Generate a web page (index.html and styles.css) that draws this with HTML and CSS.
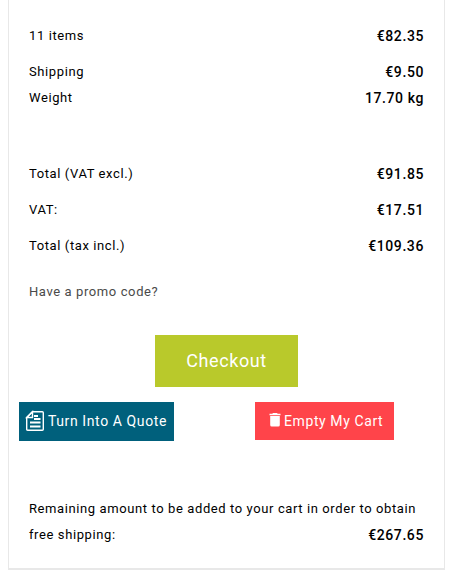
FILE: index.html
```html
<!DOCTYPE html>
<html lang="en">
<head>
    <meta charset="UTF-8">
    <meta name="viewport" content="width=device-width, initial-scale=1.0">
    <title>Cart</title>
    <link rel="stylesheet" href="styles.css">
</head>
<body>
    <div class="cart-summary">
        <div class="line">
            <span class="label">11 items</span>
            <span class="value">€82.35</span>
        </div>
        <div class="line joined">
            <span class="label">Shipping</span>
            <span class="value">€9.50</span>
        </div>
        <div class="line">
            <span class="label">Weight</span>
            <span class="value">17.70 kg</span>
        </div>

        <div class="totals">
            <div class="line">
                <span class="label">Total (VAT excl.)</span>
                <span class="value">€91.85</span>
            </div>
            <div class="line">
                <span class="label">VAT:</span>
                <span class="value">€17.51</span>
            </div>
            <div class="line">
                <span class="label">Total (tax incl.)</span>
                <span class="value">€109.36</span>
            </div>
        </div>

        <a class="promo">Have a promo code?</a>

        <button class="btn checkout">Checkout</button>

        <div class="actions">
            <button class="btn quote">
                <svg width="20" height="22" viewBox="0 0 20 22" fill="none" stroke="#fff">
                    <path d="M7.5 1.7h9.8q1 0 1 1v16.6q0 1-1 1H2.7q-1 0-1-1V7.5z" stroke-width="1.4"/>
                    <path d="M7.5 1.7V7.5H1.7z" stroke-width="1.4"/>
                    <path d="M9 6h4M9 9h6.500M5 12.500h10.500M5 16.500h10.500" stroke-width="2"/>
                </svg>
                <span>Turn Into A Quote</span>
            </button>
            <button class="btn empty">
                <svg width="12" height="14" viewBox="0 0 12 14" fill="#fff">
                    <path d="M4 0h4l.7.8h2.8v1.5H.5V.8h2.8zM1.200 3.100h9.600v9q0 1.500-1.500 1.500H2.700q-1.500 0-1.500-1.500z"/>
                </svg>
                <span>Empty My Cart</span>
            </button>
        </div>

        <div class="free-shipping">
            Remaining amount to be added to your cart in order to obtain free shipping:
            <span class="value">€267.65</span>
        </div>
    </div>
</body>
</html>
```
FILE: styles.css
```css
* {
    box-sizing: border-box;
}
body {
    margin: 0;
    background: #fff;
    color: #000;
    font-family: Roboto, sans-serif;
    font-size: 13px;
    line-height: 26px;
    letter-spacing: 0.6px;
}
.cart-summary {
    width: 437px;
    height: 570px;
    margin-left: 8px;
    padding: 23px 20px 0;
    border: 1px solid #e8e8e8;
    border-top: none;
    border-bottom-width: 2px;
}
.line {
    display: flex;
    justify-content: space-between;
    height: 26px;
    margin-bottom: 10px;
}
.line.joined {
    margin-bottom: 0;
}
.value {
    font-size: 14px;
    font-weight: 500;
}
.totals {
    margin-top: 50px;
}
.promo {
    display: block;
    margin-top: 20px;
    color: #4a4a4a;
}
.btn {
    display: flex;
    align-items: center;
    padding: 0;
    border: none;
    color: #fff;
    font-family: inherit;
    font-size: 14px;
    letter-spacing: 0.6px;
    white-space: nowrap;
    cursor: pointer;
}
.checkout {
    justify-content: center;
    width: 143px;
    height: 52px;
    margin: 30px 0 15px 126px;
    padding-bottom: 1px;
    background: #b9c92b;
    font-size: 18px;
}
.actions {
    display: flex;
    align-items: flex-start;
    gap: 81px;
    margin-left: -10px;
}
.quote {
    gap: 3px;
    width: 155px;
    height: 39px;
    padding: 0 0 1px 6px;
    background: #00607c;
}
.empty {
    gap: 3px;
    width: 139px;
    height: 38px;
    padding-left: 14px;
    background: #ff444a;
}
.empty svg {
    margin-top: -3px;
}
.free-shipping {
    margin-top: 55px;
}
.free-shipping .value {
    float: right;
}
```
